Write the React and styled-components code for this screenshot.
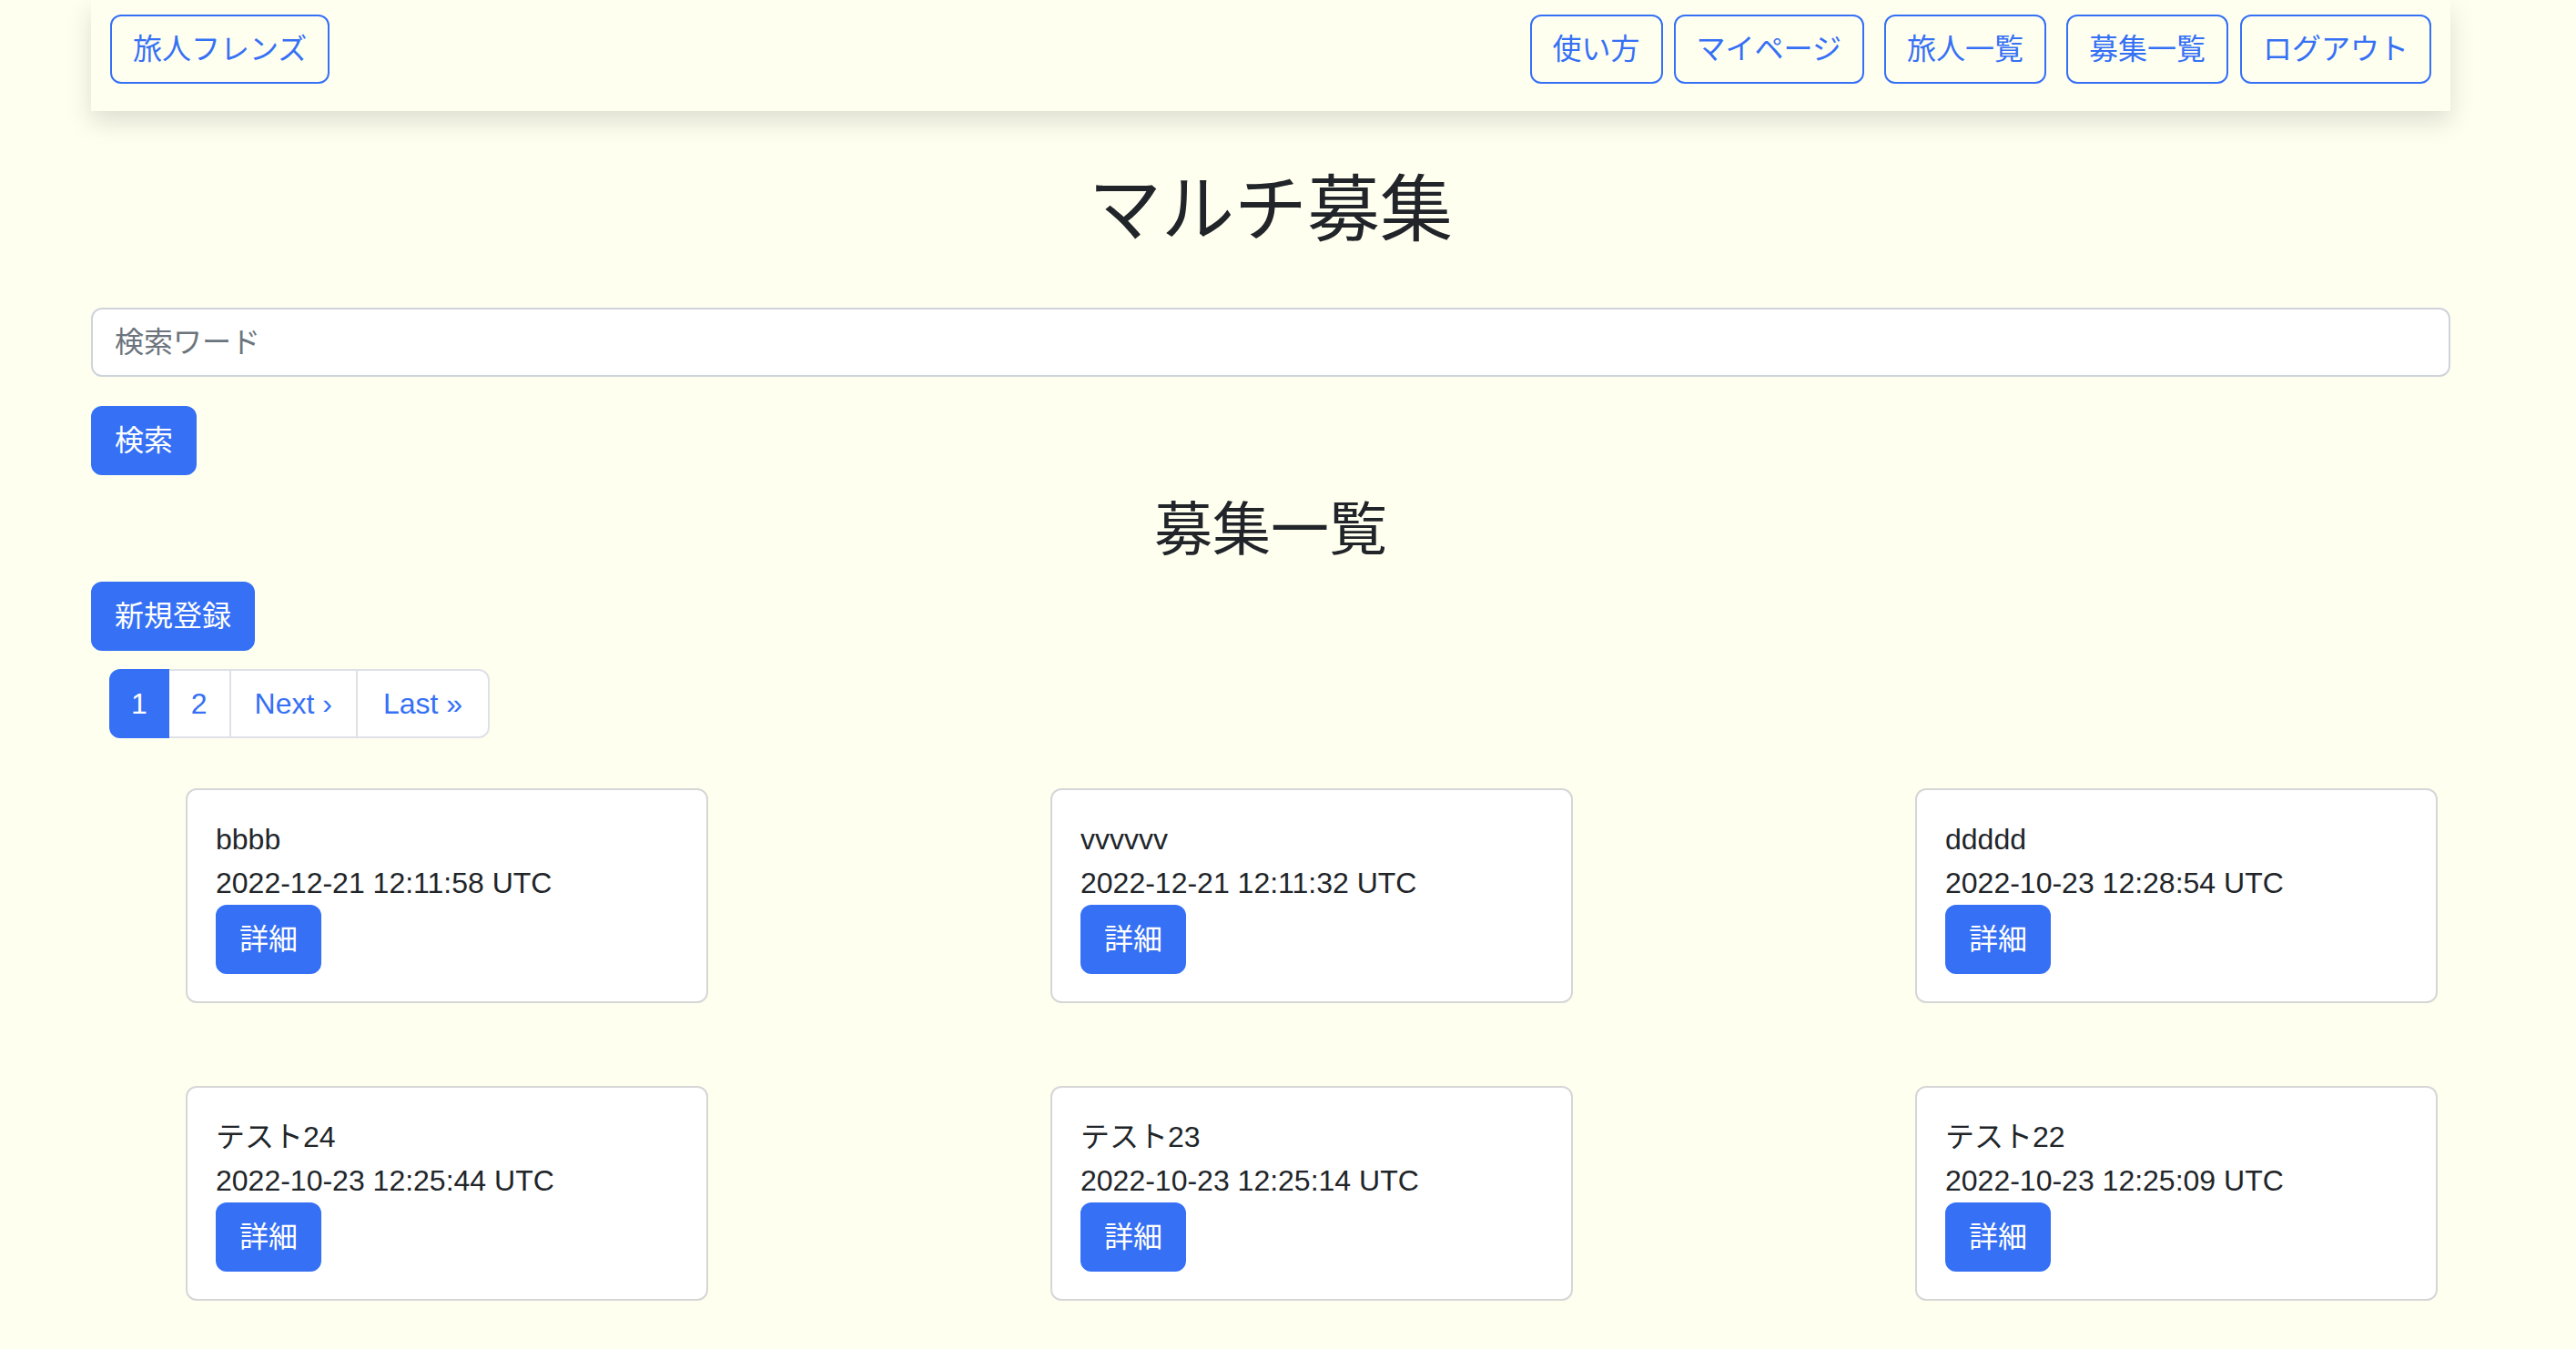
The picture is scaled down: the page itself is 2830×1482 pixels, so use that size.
import React from 'react';
import styled, { createGlobalStyle } from 'styled-components';

const GlobalStyle = createGlobalStyle`
    body {
        margin: 0;
        background: #fffff0;
        font-family: "Liberation Sans", "Noto Sans CJK JP", sans-serif;
        color: #212529;
    }
`

const blue = '#3570f5';

const Page = styled.div`
    width: 2592px;
    margin-left: 100px;
`

const NavBar = styled.nav`
    display: flex;
    justify-content: space-between;
    align-items: flex-start;
    height: 122px;
    box-sizing: border-box;
    padding: 16px 21px 0;
    background: #fffff0;
    box-shadow: 0 12px 26px rgba(0, 0, 0, 0.13);
`

const NavGroup = styled.div`
    display: flex;
`

const OutlineButton = styled.button`
    font-family: inherit;
    font-size: 32px;
    line-height: 48px;
    padding: 12px 23px;
    margin-left: ${props => props.gap || 0}px;
    border: 2px solid ${blue};
    border-radius: 12px;
    background: transparent;
    color: ${blue};
    cursor: pointer;
`

const Title = styled.h1`
    margin: 61px 0 59px;
    font-size: 80px;
    line-height: 96px;
    font-weight: 400;
    text-align: center;
`

const SearchInput = styled.input`
    display: block;
    width: 100%;
    box-sizing: border-box;
    height: 76px;
    padding: 12px 24px;
    font-family: inherit;
    font-size: 32px;
    border: 2px solid #ced4da;
    border-radius: 12px;
    background: #fff;
    &::placeholder {
        color: #6c757d;
    }
`

const PrimaryButton = styled.button`
    display: block;
    font-family: inherit;
    font-size: 32px;
    line-height: 48px;
    padding: 12px 24px;
    margin-top: ${props => props.top || 0}px;
    border: 2px solid ${blue};
    border-radius: 12px;
    background: ${blue};
    color: #fff;
    cursor: pointer;
`

const SubTitle = styled.h2`
    margin: 22px 0 18px;
    font-size: 64px;
    line-height: 77px;
    font-weight: 400;
    text-align: center;
`

const Pagination = styled.ul`
    display: flex;
    list-style: none;
    margin: 20px 0 0 20px;
    padding: 0;
`

const PageLink = styled.li`
    font-size: 32px;
    line-height: 48px;
    padding: 12px ${props => props.pad}px;
    border: 2px solid ${props => props.active ? blue : '#dee2e6'};
    margin-left: -2px;
    background: ${props => props.active ? blue : '#fff'};
    color: ${props => props.active ? '#fff' : blue};
    position: relative;
    z-index: ${props => props.active ? 1 : 0};
    &:first-child {
        margin-left: 0;
        border-radius: 12px 0 0 12px;
    }
    &:last-child {
        border-radius: 0 12px 12px 0;
    }
`

const CardGrid = styled.div`
    display: grid;
    grid-template-columns: repeat(3, 574px);
    justify-content: space-between;
    row-gap: 91px;
    margin-top: 55px;
    padding: 0 14px 0 104px;
`

const Card = styled.div`
    background: #fff;
    border: 2px solid #d6d6d6;
    border-radius: 12px;
    padding: 30px 31px 30px;
`

const CardLine = styled.div`
    font-size: 32px;
    line-height: 48px;
`

const posts = [
    { title: 'bbbb', date: '2022-12-21 12:11:58 UTC' },
    { title: 'vvvvvv', date: '2022-12-21 12:11:32 UTC' },
    { title: 'ddddd', date: '2022-10-23 12:28:54 UTC' },
    { title: 'テスト24', date: '2022-10-23 12:25:44 UTC' },
    { title: 'テスト23', date: '2022-10-23 12:25:14 UTC' },
    { title: 'テスト22', date: '2022-10-23 12:25:09 UTC' },
];

const navLinks = [
    { label: '使い方', gap: 0 },
    { label: 'マイページ', gap: 12 },
    { label: '旅人一覧', gap: 22 },
    { label: '募集一覧', gap: 22 },
    { label: 'ログアウト', gap: 13 },
];

const pages = [
    { label: '1', pad: 22, active: true },
    { label: '2', pad: 24 },
    { label: 'Next ›', pad: 26 },
    { label: 'Last »', pad: 28 },
];

export default function App() {
    return (
        <Page>
            <GlobalStyle />
            <NavBar>
                <OutlineButton>旅人フレンズ</OutlineButton>
                <NavGroup>
                    {navLinks.map(link => (
                        <OutlineButton key={link.label} gap={link.gap}>{link.label}</OutlineButton>
                    ))}
                </NavGroup>
            </NavBar>

            <Title>マルチ募集</Title>
            <SearchInput placeholder="検索ワード" />
            <PrimaryButton top={32}>検索</PrimaryButton>

            <SubTitle>募集一覧</SubTitle>
            <PrimaryButton>新規登録</PrimaryButton>

            <Pagination>
                {pages.map(page => (
                    <PageLink key={page.label} pad={page.pad} active={page.active}>{page.label}</PageLink>
                ))}
            </Pagination>

            <CardGrid>
                {posts.map((post, index) => (
                    <Card key={index}>
                        <CardLine>{post.title}</CardLine>
                        <CardLine>{post.date}</CardLine>
                        <PrimaryButton>詳細</PrimaryButton>
                    </Card>
                ))}
            </CardGrid>
        </Page>
    );
}
